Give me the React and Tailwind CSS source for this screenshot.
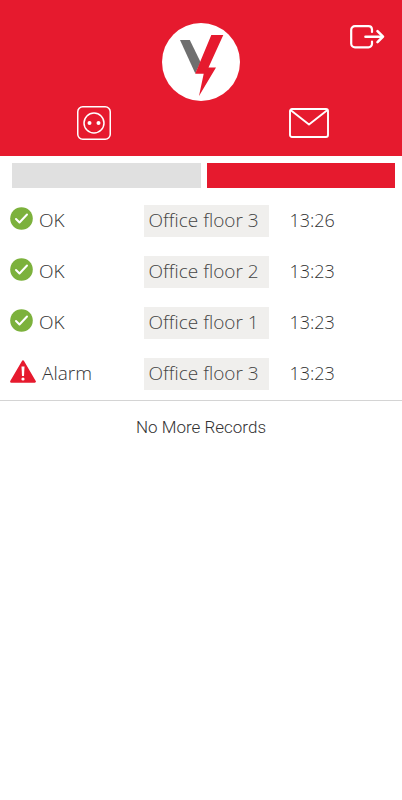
import React, { useState } from "react";

const records = [
  { id: 1, status: "OK", place: "Office floor 3", time: "13:26" },
  { id: 2, status: "OK", place: "Office floor 2", time: "13:23" },
  { id: 3, status: "OK", place: "Office floor 1", time: "13:23" },
  { id: 4, status: "Alarm", place: "Office floor 3", time: "13:23" },
];

const Logo = () => (
  <svg width="78" height="78" viewBox="0 0 78 78" aria-hidden="true">
    <circle cx="39" cy="39" r="39" fill="#fff" />
    <path d="M18 17H27.800L38.500 39L33.300 50.500Z" fill="#6f6f6f" />
    <path d="M49.300 12H61.300L46.500 44.500H54L37 73L41.700 50.700H33.200Z" fill="#e61a2e" />
  </svg>
);

const LogoutIcon = () => (
  <svg
    width="35"
    height="24"
    viewBox="0 0 35 24"
    fill="none"
    stroke="#fff"
    strokeWidth="2.200"
    strokeLinecap="round"
    strokeLinejoin="round"
    aria-hidden="true"
  >
    <path d="M22 7V4.500A3.500 3.500 0 0 0 18.500 1.200H5A3.800 3.800 0 0 0 1.200 5V18.500A3.800 3.800 0 0 0 5 22.300H18.500A3.500 3.500 0 0 0 22 18.800V16.500" />
    <path d="M15.500 11.700H32" strokeWidth="2.600" />
    <path d="M27.500 6.200L33 11.700L27.500 17.200" strokeWidth="2.600" />
  </svg>
);

const SocketIcon = () => (
  <svg width="34" height="34" viewBox="0 0 34 34" fill="none" stroke="#fff" aria-hidden="true">
    <rect x="0.750" y="0.750" width="32.500" height="32.500" rx="5" strokeWidth="1.500" />
    <circle cx="17" cy="17" r="10" strokeWidth="1.500" />
    <circle cx="12.500" cy="17" r="2" fill="#fff" stroke="none" />
    <circle cx="21.500" cy="17" r="2" fill="#fff" stroke="none" />
  </svg>
);

const MailIcon = () => (
  <svg
    width="40"
    height="30"
    viewBox="0 0 40 30"
    fill="none"
    stroke="#fff"
    strokeWidth="1.900"
    strokeLinejoin="round"
    aria-hidden="true"
  >
    <rect x="1" y="1" width="38" height="28" rx="2" />
    <path d="M1.500 2L20 16.500L38.500 2" />
  </svg>
);

const OkIcon = () => (
  <svg width="23" height="23" viewBox="0 0 23 23" aria-hidden="true">
    <circle cx="11.500" cy="11.500" r="11.300" fill="#7cb13c" />
    <path
      d="M6 12L9.500 15.500L17 7.500"
      fill="none"
      stroke="#fff"
      strokeWidth="2"
      strokeLinecap="round"
      strokeLinejoin="round"
    />
  </svg>
);

const AlarmIcon = () => (
  <svg width="26" height="23" viewBox="0 0 26 23" aria-hidden="true">
    <path
      d="M13 1.500L24.700 21.500H1.300Z"
      fill="#e61a2e"
      stroke="#e61a2e"
      strokeWidth="2.400"
      strokeLinejoin="round"
    />
    <path d="M11.500 6.500H14.500L14 16H12Z" fill="#fff" />
    <circle cx="13" cy="19" r="1.600" fill="#fff" />
  </svg>
);

const App = () => {
  const [tab, setTab] = useState("messages");

  return (
    <div className="min-h-screen bg-white font-['Open_Sans',sans-serif]">
      <header className="bg-[#e61a2e] pt-[23px] pb-4">
        <div className="grid grid-cols-[1fr_auto_1fr] items-start">
          <span />
          <Logo />
          <button type="button" aria-label="Log out" className="mt-[2px] mr-[17px] justify-self-end">
            <LogoutIcon />
          </button>
        </div>
        <div className="mt-[5px] flex items-center justify-between pr-[73px] pl-[77px]">
          <button type="button" aria-label="Sockets" onClick={() => setTab("sockets")}>
            <SocketIcon />
          </button>
          <button type="button" aria-label="Messages" onClick={() => setTab("messages")}>
            <MailIcon />
          </button>
        </div>
      </header>

      {/* Active section marker */}
      <div className="grid grid-cols-2 gap-[6px] pt-[7px] pr-[7px] pl-3">
        <div className={`h-[25px] ${tab === "sockets" ? "bg-[#e61a2e]" : "bg-[#e0e0e0]"}`} />
        <div className={`h-[25px] ${tab === "messages" ? "bg-[#e61a2e]" : "bg-[#e0e0e0]"}`} />
      </div>

      <ul className="border-b border-[#d4d4d4] pt-[7px] pb-px text-[19px] font-light text-[#333]">
        {records.map((record) => (
          <li
            key={record.id}
            className="grid h-[51px] grid-cols-[1fr_125px_1fr] items-center pl-[10px]"
          >
            <div className="flex items-center gap-[6px]">
              <span className="pb-1">{record.status === "OK" ? <OkIcon /> : <AlarmIcon />}</span>
              <span>{record.status}</span>
            </div>
            <span className="h-8 bg-[#f0efed] pl-[5px] leading-[30px] whitespace-nowrap text-[#444]">
              {record.place}
            </span>
            <span className="pb-[2px] pl-[21px] text-lg">{record.time}</span>
          </li>
        ))}
      </ul>

      <p className="pt-[14px] text-center font-['Roboto',sans-serif] text-[17px] font-light text-[#333]">
        No More Records
      </p>
    </div>
  );
};

export default App;
